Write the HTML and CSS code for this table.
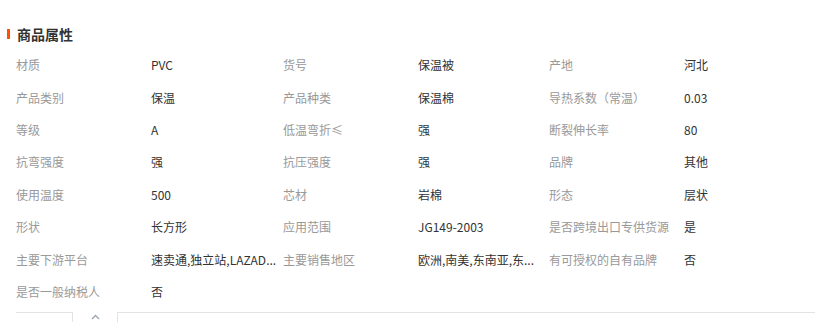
FILE: index.html
```html
<!DOCTYPE html>
<html lang="zh-CN">
<head>
<meta charset="utf-8">
<title>商品属性</title>
<link rel="stylesheet" href="styles.css">
</head>
<body>
<section class="attrs">
  <h2 class="attrs-title"><span class="bar"></span>商品属性</h2>
  <div class="grid">
    <div class="k">材质</div><div class="v">PVC</div>
    <div class="k">货号</div><div class="v">保温被</div>
    <div class="k">产地</div><div class="v">河北</div>

    <div class="k">产品类别</div><div class="v">保温</div>
    <div class="k">产品种类</div><div class="v">保温棉</div>
    <div class="k">导热系数（常温）</div><div class="v">0.03</div>

    <div class="k">等级</div><div class="v">A</div>
    <div class="k">低温弯折≤</div><div class="v">强</div>
    <div class="k">断裂伸长率</div><div class="v">80</div>

    <div class="k">抗弯强度</div><div class="v">强</div>
    <div class="k">抗压强度</div><div class="v">强</div>
    <div class="k">品牌</div><div class="v">其他</div>

    <div class="k">使用温度</div><div class="v">500</div>
    <div class="k">芯材</div><div class="v">岩棉</div>
    <div class="k">形态</div><div class="v">层状</div>

    <div class="k">形状</div><div class="v">长方形</div>
    <div class="k">应用范围</div><div class="v">JG149-2003</div>
    <div class="k">是否跨境出口专供货源</div><div class="v">是</div>

    <div class="k">主要下游平台</div><div class="v">速卖通,独立站,LAZAD...</div>
    <div class="k">主要销售地区</div><div class="v">欧洲,南美,东南亚,东...</div>
    <div class="k">有可授权的自有品牌</div><div class="v">否</div>

    <div class="k">是否一般纳税人</div><div class="v">否</div>
  </div>
  <div class="tabs">
    <div class="tab-left"></div>
    <div class="tab-toggle"><svg width="9" height="6" viewBox="0 0 9 6"><path d="M1 5 L4.5 1.5 L8 5" fill="none" stroke="#9aa3b0" stroke-width="1.3"/></svg></div>
    <div class="tab-right"></div>
  </div>
</section>
</body>
</html>
```

FILE: styles.css
```css
html, body {
  margin: 0;
  padding: 0;
  background: #fff;
}
body {
  font-family: "Noto Sans CJK SC", "Microsoft YaHei", sans-serif;
  font-size: 12px;
  color: #333;
}
.attrs {
  padding: 24px 0 0 0;
}
.attrs-title {
  display: flex;
  align-items: center;
  margin: 0 0 5px 7px;
  height: 20px;
  font-size: 14px;
  font-weight: bold;
  color: #333;
  line-height: 20px;
}
.bar {
  display: inline-block;
  width: 3px;
  height: 10px;
  background: #ff5000;
  margin-right: 7px;
}
.grid {
  display: grid;
  grid-template-columns: 135px 132px 135px 131px 135px 132px;
  grid-auto-rows: 32.43px;
  padding-left: 16px;
  align-items: center;
}
.k {
  color: #999;
  white-space: nowrap;
  line-height: 18px;
}
.v {
  color: #333;
  white-space: nowrap;
  line-height: 18px;
}
.tabs {
  display: flex;
  margin-top: 4px;
  padding-left: 16px;
  height: 12px;
}
.tab-left {
  width: 56px;
  border-top: 1px solid #e3e3e3;
  border-right: 1px solid #e3e3e3;
}
.tab-toggle {
  width: 44px;
  display: flex;
  justify-content: center;
  padding-top: 2px;
}
.tab-right {
  flex: 1;
  border-top: 1px solid #e3e3e3;
  border-left: 1px solid #e3e3e3;
}
```
